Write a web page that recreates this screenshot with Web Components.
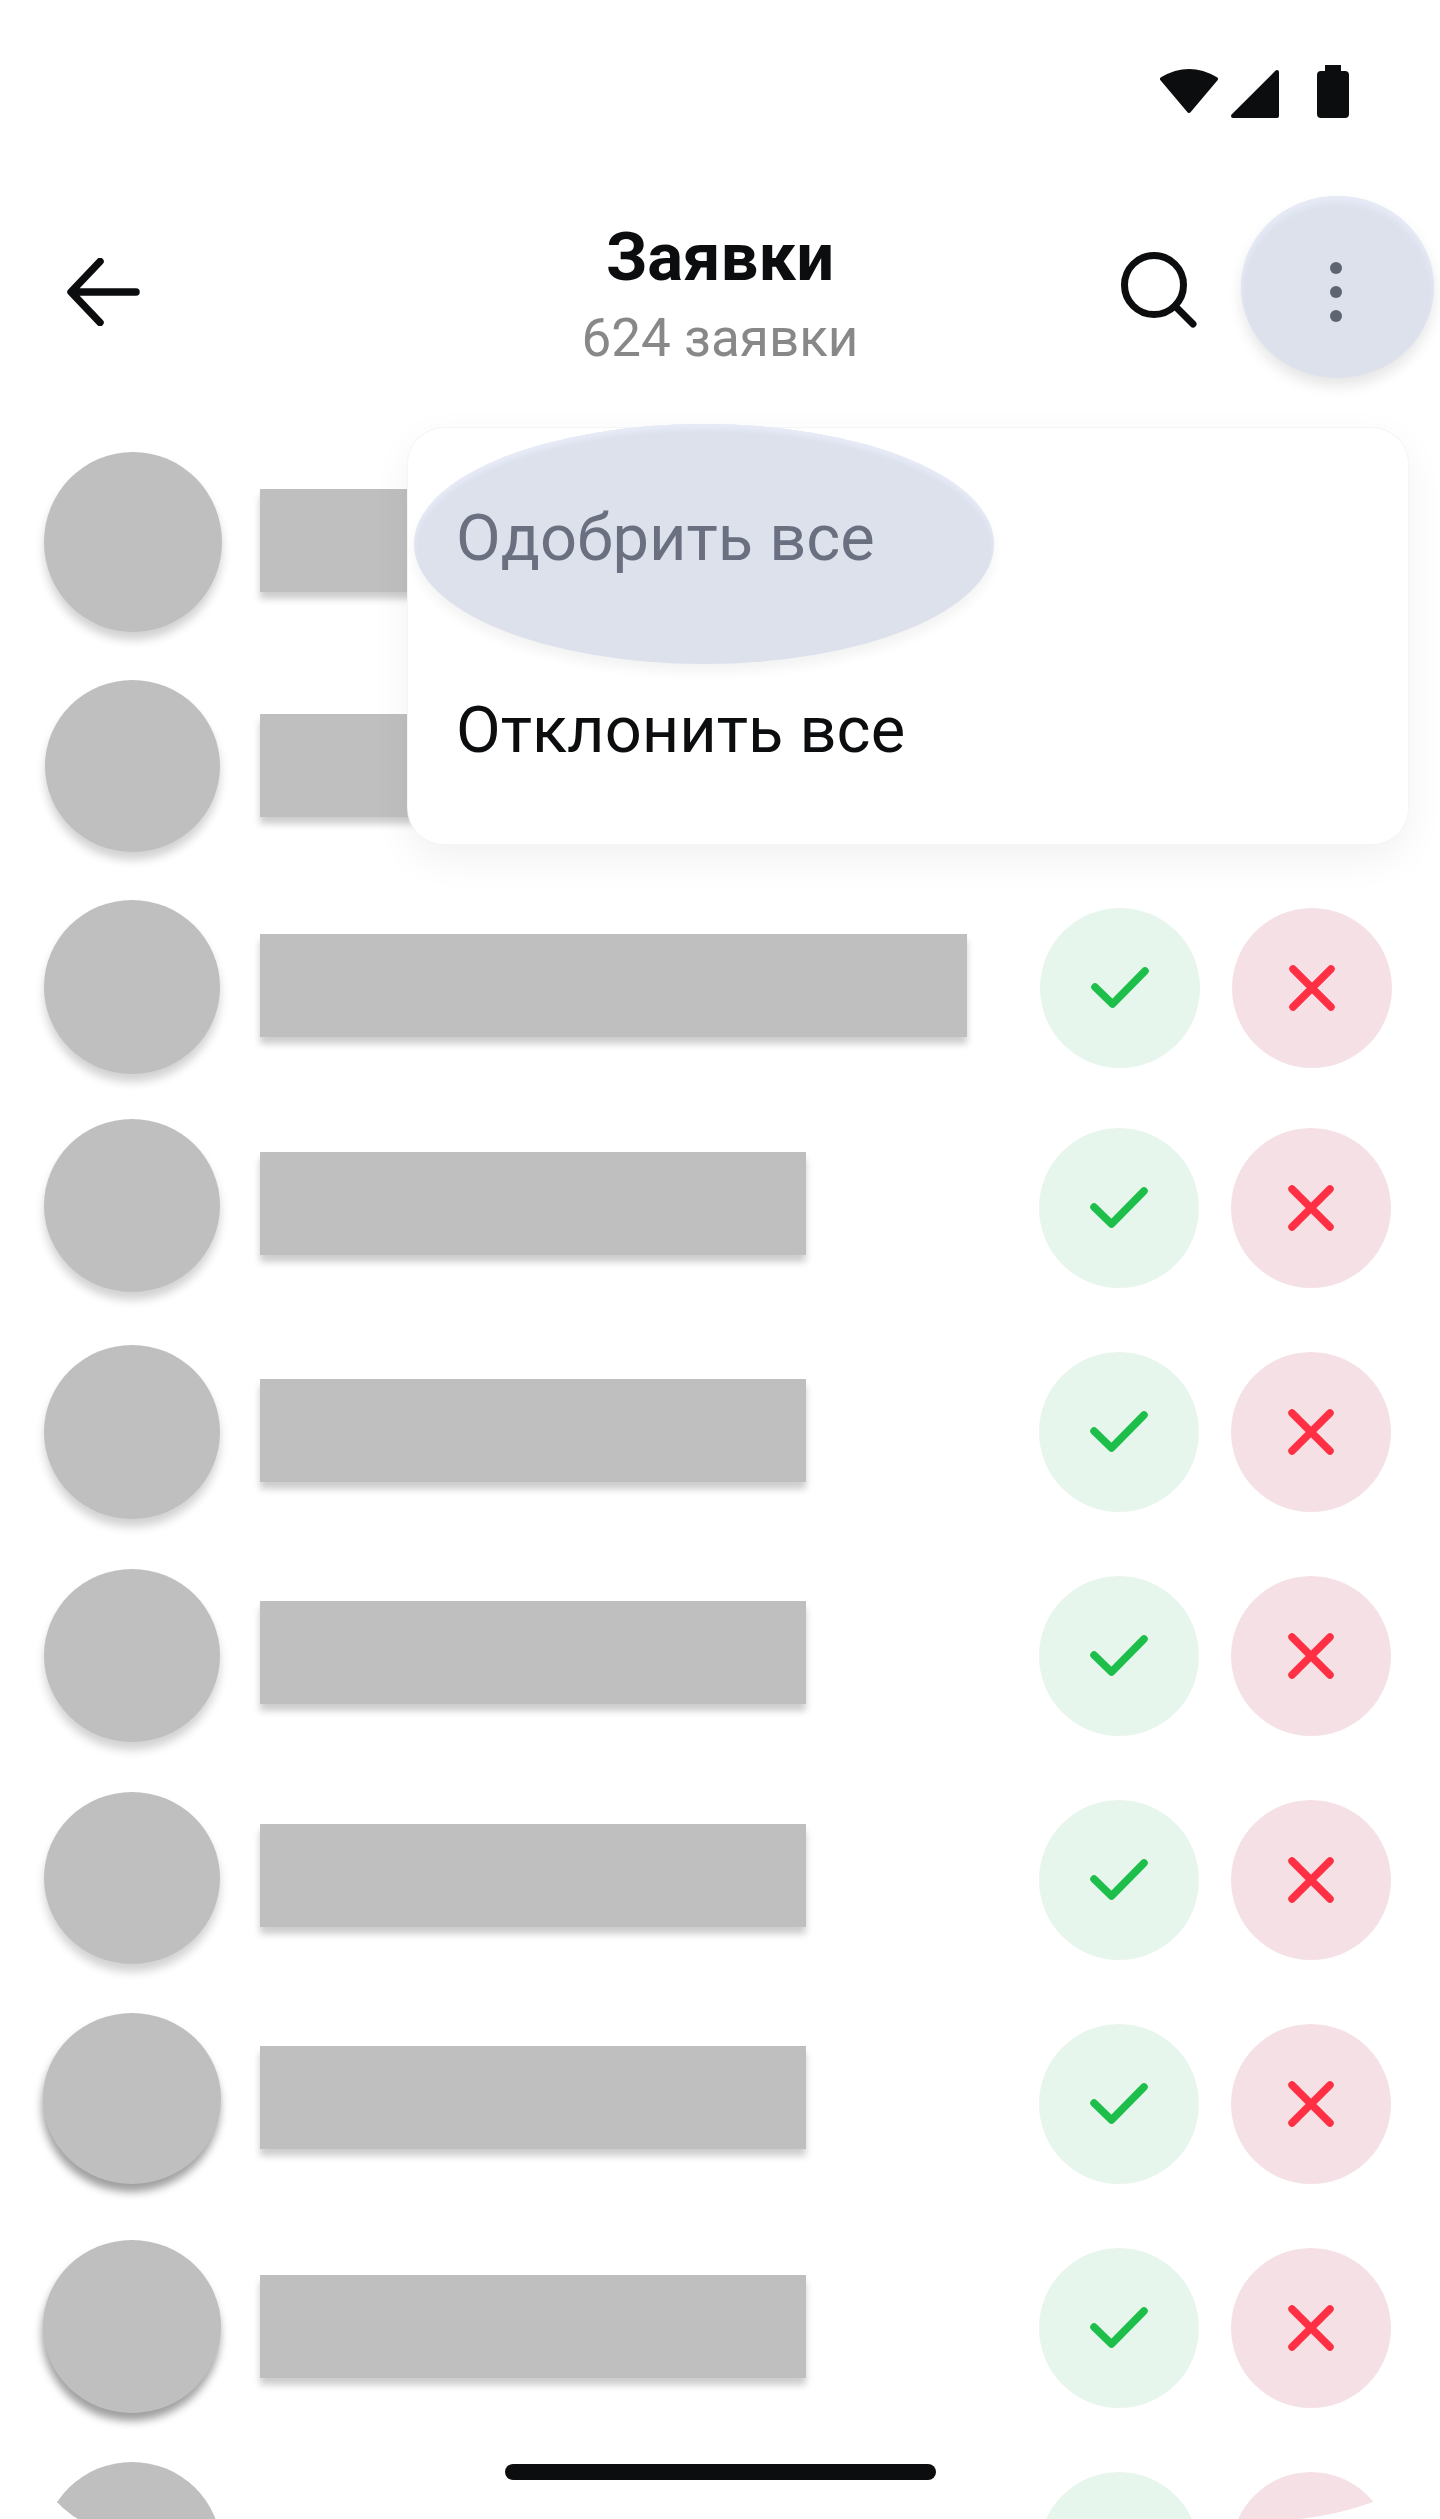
<!DOCTYPE html>
<html lang="ru">
<head>
<meta charset="utf-8">
<title>Заявки</title>
<style>
  html, body { margin: 0; padding: 0; background: #fff; }
  body { width: 1440px; height: 2519px; overflow: hidden; font-family: Roboto, "Noto Sans", sans-serif; }
</style>
</head>
<body>
<app-screen>
  <status-bar></status-bar>
  <app-header title="Заявки" subtitle="624 заявки"></app-header>
  <request-list>
    <request-row a-top="24" a-w="178" a-h="180" a-x="0" bar-top="61" bar-w="546"></request-row>
    <request-row a-top="28" a-w="175" a-h="172" a-x="1" bar-top="62" bar-w="546"></request-row>
    <request-row a-top="24" a-w="176" a-h="174" a-x="0" bar-top="58" bar-w="707" row-h="220"></request-row>
    <request-row a-top="23" a-w="176" a-h="173" a-x="0" bar-top="56" bar-w="546" btn-x="1"></request-row>
    <request-row a-top="25" a-w="176" a-h="174" a-x="0" bar-top="59" bar-w="546" btn-x="1"></request-row>
    <request-row a-top="25" a-w="176" a-h="173" a-x="0" bar-top="57" bar-w="546" btn-x="1"></request-row>
    <request-row a-top="24" a-w="176" a-h="172" a-x="0" bar-top="56" bar-w="546" btn-x="1"></request-row>
    <request-row a-top="21" a-w="178" a-h="171" a-x="-1" bar-top="54" bar-w="546" btn-x="1" heavy></request-row>
    <request-row a-top="24" a-w="178" a-h="173" a-x="-1" bar-top="59" bar-w="546" btn-x="1" heavy></request-row>
    <request-row a-top="22" a-w="178" a-h="174" a-x="-1" bar-top="59" bar-w="546" btn-x="1" cut></request-row>
  </request-list>
  <action-menu slot="overlay">
    <menu-item active>Одобрить все</menu-item>
    <menu-item>Отклонить все</menu-item>
  </action-menu>
  <home-bar slot="overlay"></home-bar>
</app-screen>

<script>
class AppScreen extends HTMLElement {
  constructor() {
    super();
    this.attachShadow({ mode: "open" }).innerHTML = `
      <style>
        :host { display: block; position: relative; width: 1440px; height: 2519px; overflow: hidden; background: #fff; }
      </style>
      <slot></slot>
      <slot name="overlay"></slot>`;
  }
}

class StatusBar extends HTMLElement {
  constructor() {
    super();
    this.attachShadow({ mode: "open" }).innerHTML = `
      <style>
        :host { display: flex; justify-content: flex-end; align-items: flex-start; height: 131px; box-sizing: border-box; padding: 65px 91px 0 0; color: #0c0d0f; }
        svg { display: block; fill: currentColor; stroke: currentColor; stroke-linejoin: round; }
        .wifi { margin-top: 3px; }
        .signal { margin: 4px 37px 0 11px; }
        .battery { stroke: none; }
      </style>
      <svg class="wifi" width="60" height="46" viewBox="0 0 60 46" stroke-width="4"><path d="M3 11Q30-5 57 11L30 43Z"/></svg>
      <svg class="signal" width="50" height="49" viewBox="0 0 50 49" stroke-width="4"><path d="M47 3V47H3Z"/></svg>
      <svg class="battery" width="32" height="53" viewBox="0 0 32 53"><path d="M8 0H24V6H28Q32 6 32 10V49Q32 53 28 53H4Q0 53 0 49V10Q0 6 4 6H8Z"/></svg>`;
  }
}

class AppHeader extends HTMLElement {
  constructor() {
    super();
    this.attachShadow({ mode: "open" }).innerHTML = `
      <style>
        :host { display: grid; grid-template-columns: 1fr auto 1fr; height: 297px; color: #0c0d0f; }
        .left { padding: 127px 0 0 66px; }
        .center { text-align: center; padding-top: 90px; }
        .title { font: 700 67px/72px Roboto, sans-serif; }
        .sub { font: 400 53px/60px Roboto, sans-serif; color: #888; margin-top: 15px; }
        .right { display: flex; justify-content: flex-end; align-items: flex-start; padding: 65px 6px 0 0; }
        .search { margin: 56px 44px 0 0; }
        .more { box-sizing: border-box; padding-top: 10px; width: 193px; height: 182px; border-radius: 50%; background: #dce1ec; box-shadow: 0 8px 14px rgba(0,0,0,.1), inset 0 6px 6px #e6ebf7; display: flex; flex-direction: column; align-items: center; justify-content: center; gap: 12px; }
        .more i { width: 12px; height: 12px; border-radius: 50%; background: #5e6470; margin-left: -3px; }
        svg { display: block; fill: none; stroke: currentColor; stroke-linecap: round; stroke-linejoin: round; }
      </style>
      <div class="left">
        <svg width="76" height="68" viewBox="0 0 76 68" stroke-width="7.500"><path d="M70 34H6M34 3.500L5 34L34 64.500"/></svg>
      </div>
      <div class="center">
        <div class="title"></div>
        <div class="sub"></div>
      </div>
      <div class="right">
        <svg class="search" width="76" height="76" viewBox="0 0 76 76" stroke-width="7"><circle cx="33" cy="33" r="29.500"/><path d="M54 54L72 72"/></svg>
        <div class="more"><i></i><i></i><i></i></div>
      </div>`;
    this.shadowRoot.querySelector(".title").textContent = this.getAttribute("title");
    this.shadowRoot.querySelector(".sub").textContent = this.getAttribute("subtitle");
  }
}

class RequestList extends HTMLElement {
  constructor() {
    super();
    this.attachShadow({ mode: "open" }).innerHTML = `
      <style>:host { display: block; }</style>
      <slot></slot>`;
  }
}

class RequestRow extends HTMLElement {
  constructor() {
    super();
    const n = (name, d) => this.hasAttribute(name) ? this.getAttribute(name) : d;
    const shadow = this.hasAttribute("heavy")
      ? "-1px 8px 8px rgba(0,0,0,.38)"
      : "0 8px 10px rgba(0,0,0,.18)";
    this.attachShadow({ mode: "open" }).innerHTML = `
      <style>
        :host { display: flex; align-items: flex-start; height: ${n("row-h", 224)}px; padding: 0 ${48 + Number(n("btn-x", 0))}px 0 44px; }
        .avatar { flex: none; width: ${n("a-w", 176)}px; height: ${n("a-h", 174)}px; margin: ${n("a-top", 24)}px 0 0 ${n("a-x", 0)}px; border-radius: 50%; background: #bfbfbf; box-shadow: ${shadow}; }
        .bar { flex: none; width: ${n("bar-w", 546)}px; height: 103px; margin: ${n("bar-top", 58)}px 0 0 ${216 - Number(n("a-w", 176)) - Number(n("a-x", 0))}px; background: #bfbfbf; box-shadow: 0 7px 7px rgba(0,0,0,.2); }
        .actions { display: flex; gap: 32px; margin: 32px 0 0 auto; }
        .btn { width: 160px; height: 160px; border-radius: 50%; }
        .ok { background: #e7f6ec; color: #1dbf4a; }
        .no { background: #f5e1e5; color: #ff2f44; }
        svg { display: block; fill: none; stroke: currentColor; stroke-width: 7.500; stroke-linecap: round; stroke-linejoin: round; }
        :host([cut]) .bar { visibility: hidden; }
        :host([cut]) .avatar { box-shadow: none; clip-path: polygon(0 0, 100% 0, 100% 100%, 35px 100%, 35px 57px, 30px 54px, 25px 50px, 20px 46px, 15px 41px, 0 41px); }
        :host([cut]) .no { clip-path: path("M0 0H160V22L142 30Q110 42 70 47H0Z"); }
      </style>
      <div class="avatar"></div>
      <div class="bar"></div>
      <div class="actions">
        <div class="btn ok"><svg width="160" height="160" viewBox="0 0 160 160"><path d="M55 79L72.500 96L105 63"/></svg></div>
        <div class="btn no"><svg width="160" height="160" viewBox="0 0 160 160"><path d="M61 61L99 99M99 61L61 99"/></svg></div>
      </div>`;
  }
}

class ActionMenu extends HTMLElement {
  constructor() {
    super();
    this.attachShadow({ mode: "open" }).innerHTML = `
      <style>
        :host { display: block; position: absolute; left: 408px; top: 428px; width: 1000px; height: 416px; box-sizing: border-box; padding-top: 14px; background: #fff; border-radius: 36px; box-shadow: 0 0 0 1px #f5f5f5, 0 14px 40px rgba(0,0,0,.06); }
      </style>
      <slot></slot>`;
  }
}

class MenuItem extends HTMLElement {
  constructor() {
    super();
    this.attachShadow({ mode: "open" }).innerHTML = `
      <style>
        :host { display: flex; align-items: center; position: relative; height: 192px; padding-left: 48px; font: 400 65px/72px Roboto, sans-serif; color: #0c0d0f; }
        :host([active]) { color: #6a7080; }
        .ripple { display: none; position: absolute; left: 6px; top: -18px; width: 580px; height: 240px; border-radius: 50%; background: #dce1ec; box-shadow: 0 8px 12px rgba(0,0,0,.05), inset 0 5px 5px #e6ebf7; }
        :host([active]) .ripple { display: block; }
        span { position: relative; }
      </style>
      <div class="ripple"></div>
      <span><slot></slot></span>`;
  }
}

class HomeBar extends HTMLElement {
  constructor() {
    super();
    this.attachShadow({ mode: "open" }).innerHTML = `
      <style>
        :host { display: block; position: absolute; left: 505px; top: 2464px; width: 431px; height: 16px; border-radius: 8px; background: #0c0d0f; }
      </style>`;
  }
}

customElements.define("app-screen", AppScreen);
customElements.define("status-bar", StatusBar);
customElements.define("app-header", AppHeader);
customElements.define("request-list", RequestList);
customElements.define("request-row", RequestRow);
customElements.define("action-menu", ActionMenu);
customElements.define("menu-item", MenuItem);
customElements.define("home-bar", HomeBar);
</script>
</body>
</html>
